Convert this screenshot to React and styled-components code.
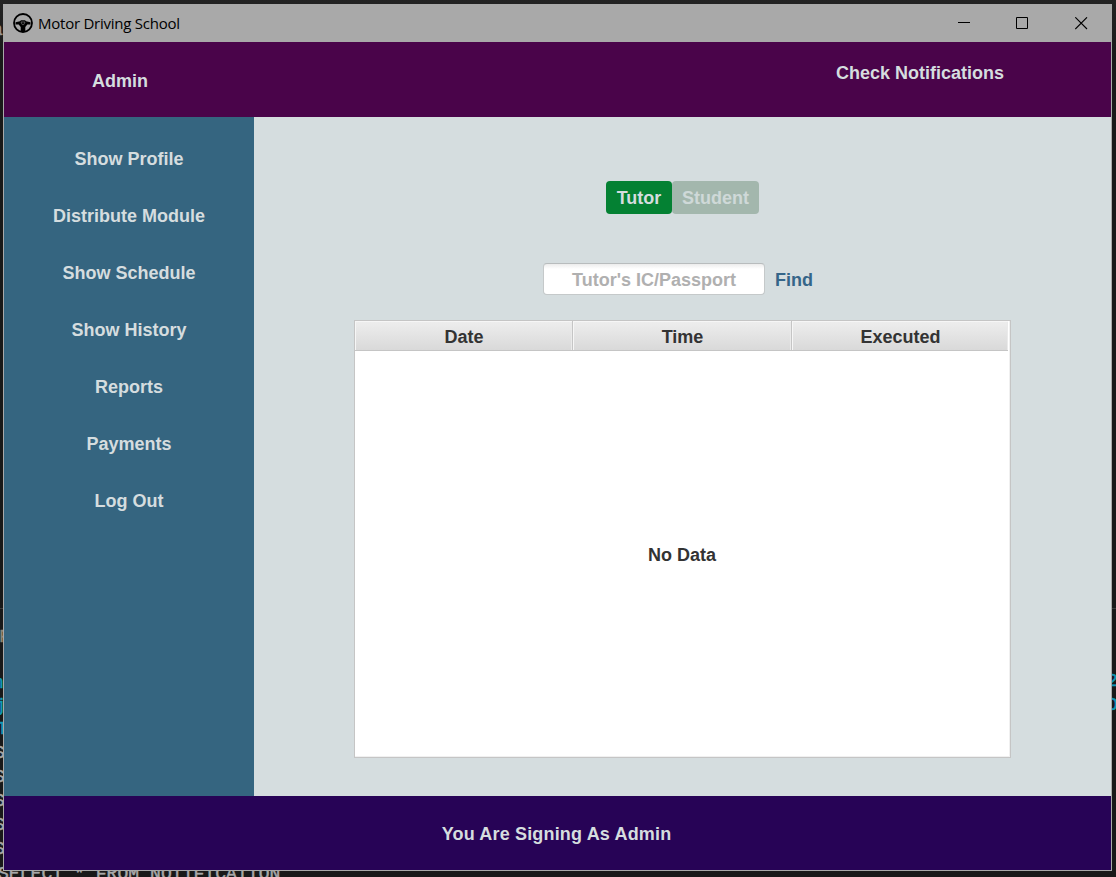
import React from "react";
import styled, { createGlobalStyle } from "styled-components";

const Global = createGlobalStyle`
  * { box-sizing: border-box; }
  body { margin: 0; background: #191919; overflow: hidden; }
`;

const Desktop = styled.div`
  position: relative;
  width: 1116px;
  height: 877px;
  padding: 4px 4px 6px 3px;
  overflow: hidden;
  background: linear-gradient(#232323, #191919 60px);
  font: bold 18px/22px "Liberation Sans", Arial, sans-serif;
  color: #d5dddf;
`;

const ConsoleLine = styled.span`
  position: absolute;
  left: ${(p) => p.$x}px;
  top: ${(p) => p.$y}px;
  font: 18px/24px "Liberation Mono", monospace;
  letter-spacing: 0.06px;
  -webkit-text-stroke: 0.5px currentColor;
  white-space: pre;
  color: ${(p) => p.$color || "#a8a8a8"};
`;

const ConsoleRule = styled.div`
  position: absolute;
  left: 0;
  right: 0;
  top: 608px;
  height: 1px;
  background: #3c3c3c;
`;

const Window = styled.div`
  position: relative;
  width: 1109px;
  height: 867px;
  display: flex;
  flex-direction: column;
  border: 1px solid #a9a9a9;
  border-top: 0;
`;

const TitleBar = styled.div`
  height: 38px;
  flex: none;
  display: flex;
  align-items: center;
  padding-left: 9px;
  background: #a9a9a9;
  color: #000;
`;

const Title = styled.span`
  flex: 1;
  margin-left: 5px;
  font: 15px/20px "Open Sans", "Noto Sans", sans-serif;
  letter-spacing: -0.24px;
`;

const Controls = styled.div`
  display: flex;
  gap: 46px;
  padding-right: 23px;
  svg { display: block; }
  svg:first-child { margin-right: -1px; }
`;

const Header = styled.header`
  height: 75px;
  flex: none;
  display: flex;
  justify-content: space-between;
  padding: 28px 107px 0 88px;
  background: #4a044a;
`;

const HeaderText = styled.span`
  margin-top: ${(p) => p.$shift || 0}px;
`;

const Body = styled.div`
  flex: 1;
  display: flex;
`;

const Sidebar = styled.nav`
  width: 250px;
  padding-top: 13px;
  background: #356580;
`;

const NavItem = styled.div`
  height: 57px;
  display: flex;
  align-items: center;
  justify-content: center;
`;

const Main = styled.main`
  flex: 1;
  display: flex;
  flex-direction: column;
  align-items: center;
  padding-top: 64px;
  background: #d5dddf;
`;

const Toggle = styled.div`
  display: flex;
`;

const ToggleButton = styled.div`
  width: ${(p) => p.$width}px;
  height: 33px;
  border-radius: 4px;
  display: flex;
  align-items: center;
  justify-content: center;
  background: ${(p) => (p.$selected ? "#048133" : "#a3b7ad")};
  color: ${(p) => (p.$selected ? "#d5dddf" : "#cfd9d8")};
`;

const SearchRow = styled.div`
  width: 657px;
  height: 32px;
  margin-top: 49px;
  padding-left: 189px;
  display: flex;
  align-items: center;
`;

const Field = styled.div`
  width: 222px;
  height: 32px;
  padding-top: 2px;
  display: flex;
  align-items: center;
  justify-content: center;
  border: 1px solid #c5c9ca;
  border-top-color: #b8bcbd;
  border-radius: 4px;
  background: linear-gradient(#ececec, #fff 5px);
  color: #b0b0b0;
`;

const Find = styled.span`
  margin-left: 10px;
  padding-top: 2px;
  color: #356589;
`;

const Table = styled.div`
  width: 657px;
  height: 438px;
  margin-top: 25px;
  display: flex;
  flex-direction: column;
  border: 1px solid #c5c5c5;
  background: #fff;
  box-shadow: inset -1px -1px #f0f0f0;
  color: #333;
`;

const TableHead = styled.div`
  height: 30px;
  width: 653px;
  flex: none;
  display: grid;
  grid-template-columns: 218px 219px 216px;
  border-bottom: 1px solid #c5c5c5;
`;

const HeadCell = styled.div`
  display: flex;
  align-items: center;
  justify-content: center;
  padding: 3px 0 0 1px;
  border-right: ${(p) => (p.$last ? "0" : "1px solid #c5c5c5")};
  background: linear-gradient(#eeeeee, #d9d9d9);
  box-shadow: inset 1px 1px #f6f6f6, inset -1px 0 #eaeaea;
`;

const Empty = styled.div`
  flex: 1;
  display: flex;
  align-items: center;
  justify-content: center;
  padding: 2px 1px 0 0;
`;

const Footer = styled.footer`
  height: 74px;
  flex: none;
  display: flex;
  align-items: center;
  justify-content: center;
  padding: 2px 2px 0 0;
  letter-spacing: 0.17px;
  background: #270356;
`;

const WheelIcon = () => (
  <svg width="20" height="20" viewBox="0 0 20 20">
    <circle cx="10" cy="10" r="9" fill="none" stroke="#000" strokeWidth="1.8" />
    <path d="M2.500 9.300L7 8.300 8 7.300h4l1 1 4.500 1v2.200h-3.200L12.300 14v4H7.700v-4L5.700 11.500H2.500z" fill="#000" />
    <path d="M8 9h4l-1.200 2.600H9.200z" fill="none" stroke="#777" strokeWidth=".7" />
  </svg>
);

const navItems = ["Show Profile", "Distribute Module", "Show Schedule", "Show History", "Reports", "Payments", "Log Out"];
const columns = ["Date", "Time", "Executed"];
const consoleLines = [
  { x: -8, y: 18, text: "a", color: "#9a9a9a" },
  { x: -1, y: 625, text: "F", color: "#8f8577" },
  { x: -7, y: 671, text: "n", color: "#1197b8" },
  { x: -5, y: 694, text: "j", color: "#1197b8" },
  { x: -3, y: 717, text: "T", color: "#1197b8" },
  { x: -6, y: 741, text: "S" },
  { x: -6, y: 765, text: "S" },
  { x: -6, y: 789, text: "S" },
  { x: -6, y: 813, text: "S" },
  { x: -6, y: 837, text: "S" },
  { x: -2, y: 862, text: "SELECT * FROM NOTIFICATION" },
  { x: 1107, y: 669, text: "2", color: "#1197b8" },
  { x: 1107, y: 693, text: "O", color: "#1197b8" },
];

export default function App() {
  return (
    <Desktop>
      <Global />
      <ConsoleRule />
      {consoleLines.map((l) => (
        <ConsoleLine key={l.y} $x={l.x} $y={l.y} $color={l.color}>{l.text}</ConsoleLine>
      ))}
      <Window>
        <TitleBar>
          <WheelIcon />
          <Title>Motor Driving School</Title>
          <Controls>
            <svg width="13" height="13"><path d="M0 5.500h12" stroke="#000" /></svg>
            <svg width="13" height="13"><path d="M.5.5h11v11H.5z" fill="none" stroke="#000" /></svg>
            <svg width="13" height="13"><path d="M.3.3l11.700 11.700M12 .3L.3 12" stroke="#000" strokeWidth="1.100" /></svg>
          </Controls>
        </TitleBar>
        <Header>
          <HeaderText>Admin</HeaderText>
          <HeaderText $shift={-8}>Check Notifications</HeaderText>
        </Header>
        <Body>
          <Sidebar>
            {navItems.map((item) => <NavItem key={item}>{item}</NavItem>)}
          </Sidebar>
          <Main>
            <Toggle>
              <ToggleButton $width={66} $selected>Tutor</ToggleButton>
              <ToggleButton $width={87}>Student</ToggleButton>
            </Toggle>
            <SearchRow>
              <Field>Tutor's IC/Passport</Field>
              <Find>Find</Find>
            </SearchRow>
            <Table>
              <TableHead>
                {columns.map((c, i) => <HeadCell key={c} $last={i === 2}>{c}</HeadCell>)}
              </TableHead>
              <Empty>No Data</Empty>
            </Table>
          </Main>
        </Body>
        <Footer>You Are Signing As Admin</Footer>
      </Window>
    </Desktop>
  );
}
